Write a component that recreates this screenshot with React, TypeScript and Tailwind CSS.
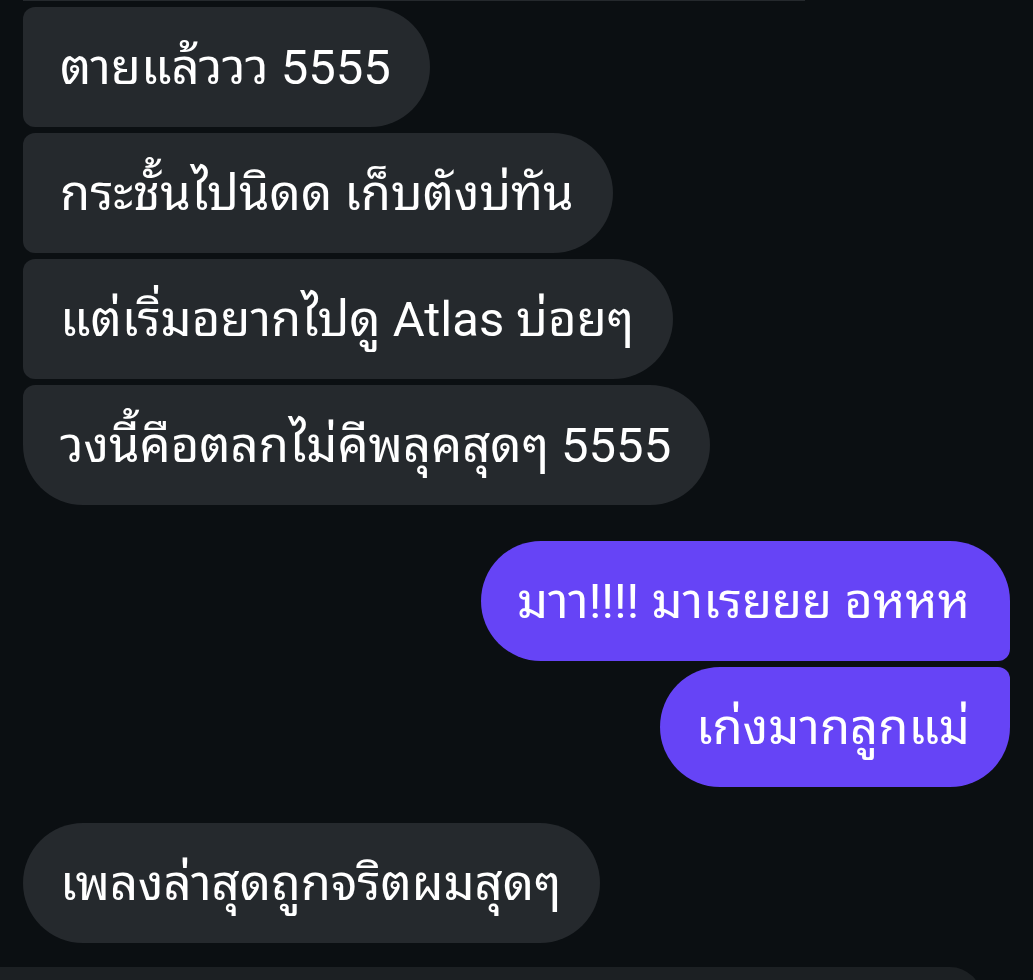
import React from "react";

const font = {
  fontFamily: 'Roboto, "Noto Sans Thai Looped", "Noto Sans Thai", "Noto Sans Thai UI", "Noto Sans", "DejaVu Sans", sans-serif',
};

function Gray({ text, cls }: { text: string; cls: string }) {
  return (
    <div
      className={`h-[120px] self-start flex items-center pl-[37px] pr-[39px] bg-[#25292d] text-white text-[49px] leading-none whitespace-nowrap ${cls}`}
    >
      {text}
    </div>
  );
}

function Purple({ text, cls }: { text: string; cls: string }) {
  return (
    <div
      className={`h-[120px] self-end flex items-center pl-[36px] pr-[40px] bg-[#6644f6] text-white text-[49px] leading-none whitespace-nowrap ${cls}`}
    >
      {text}
    </div>
  );
}

export default function App() {
  return (
    <div style={font} className="w-[1033px] h-[980px] overflow-hidden bg-[#0b0f12] flex flex-col">
      <div className="flex flex-col px-[23px]">
        <div className="h-[1px] w-[782px] bg-[#25292d]" />
        <div className="flex flex-col gap-[6px] mt-[6px]">
          <Gray text="ตายแล้ววว 5555" cls="rounded-l-[12px] rounded-r-[60px]" />
          <Gray text="กระชั้นไปนิดด เก็บตังบ่ทัน" cls="rounded-l-[12px] rounded-r-[60px]" />
          <Gray text="แต่เริ่มอยากไปดู Atlas บ่อยๆ" cls="rounded-l-[12px] rounded-r-[60px]" />
          <Gray text="วงนี้คือตลกไม่คีพลุคสุดๆ 5555" cls="rounded-tl-[12px] rounded-bl-[60px] rounded-r-[60px]" />
        </div>
        <div className="flex flex-col gap-[6px] mt-[36px]">
          <Purple text="มาา!!!! มาเรยยย อหหห" cls="rounded-l-[60px] rounded-tr-[60px] rounded-br-[12px]" />
          <Purple text="เก่งมากลูกแม่" cls="rounded-l-[60px] rounded-tr-[12px] rounded-br-[60px]" />
        </div>
        <div className="flex flex-col mt-[36px]">
          <Gray text="เพลงล่าสุดถูกจริตผมสุดๆ" cls="rounded-[60px]" />
        </div>
      </div>
      <div className="mt-[24px] h-[60px] w-[982px] shrink-0 bg-[#1c2023] rounded-tr-[32px]" />
    </div>
  );
}
